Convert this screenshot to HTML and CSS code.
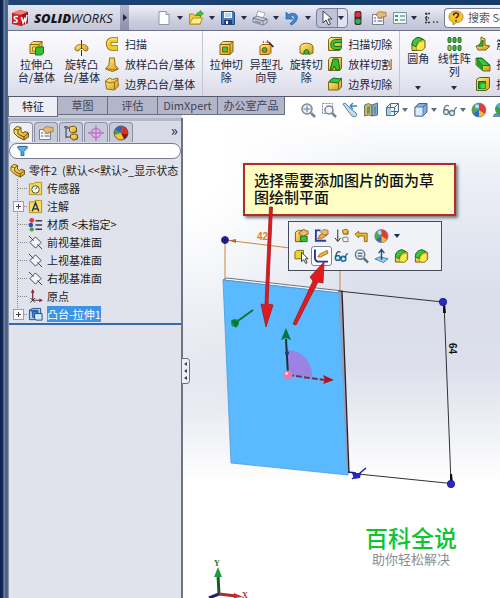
FILE: index.html
```html
<!DOCTYPE html>
<html lang="zh-CN">
<head>
<meta charset="utf-8">
<title>SolidWorks</title>
<link rel="stylesheet" href="styles.css">
</head>
<body>
<svg class="sprite" aria-hidden="true">
  <defs>
    <linearGradient id="gold" x1="0" y1="0" x2="1" y2="1"><stop offset="0" stop-color="#fff28a"/><stop offset="1" stop-color="#d99a10"/></linearGradient>
    <linearGradient id="blue" x1="0" y1="0" x2="1" y2="1"><stop offset="0" stop-color="#cfe8fb"/><stop offset="1" stop-color="#4f8fd0"/></linearGradient>
  </defs>
  <symbol id="caret" viewBox="0 0 6 4"><path d="M0 0h6L3 4z" fill="#222c4c"/></symbol>
  <symbol id="sw" viewBox="0 0 18 18"><path d="M1 4l8-3 8 2v11l-7 3-9-2z" fill="#c9222a"/><path d="M1 4l8-3 8 2-7 3z" fill="#ef8078"/><path d="M10 6l7-3v11l-7 3z" fill="#a4121d"/><path d="M7 7.500H4.500c-2 0-1.500 2.500 0 2.700 2 .2 2.500 3 0 3H2.500M10.500 8l1.500 6 1.500-4 1 3 1.500-7" fill="none" stroke="#fff" stroke-width="1.500"/></symbol>
  <symbol id="doc" viewBox="0 0 16 16"><path d="M3 1.500h7l3 3v10H3z" fill="#fdfefe" stroke="#8d97a8"/><path d="M10 1.500v3h3" fill="#d5dde8" stroke="#8d97a8"/></symbol>
  <symbol id="open" viewBox="0 0 16 16"><path d="M1.500 14V4h4l1 1.500h6V14z" fill="#f3cc3e" stroke="#b88a1c"/><path d="M1.500 14L5 8h9.500L12 14z" fill="#fff08c" stroke="#b88a1c"/><path d="M8 6c0-3 2-4 4-4V.5l3.500 3L12 6.500V5c-2 0-3 0-4 1z" fill="#4cc03a" stroke="#278a22" stroke-width=".6"/></symbol>
  <symbol id="save" viewBox="0 0 16 16"><path d="M1.500 1.500h12l1 1v12h-13z" fill="#477ec4" stroke="#224a86"/><path d="M4 2h8v6H4z" fill="#f1f7ff"/><path d="M5 4h6M5 6h6" stroke="#91a9c7"/><path d="M4 10h8v4.500H4z" fill="#233e70"/><path d="M6 11h2v3H6z" fill="#fff"/></symbol>
  <symbol id="print" viewBox="0 0 16 16"><path d="M4 7l2-6 7 2-2 5z" fill="#fff" stroke="#8994a6" stroke-width=".8"/><path d="M1 8l4-2 10 3v4l-4 2L1 12z" fill="#c9ced7" stroke="#677286" stroke-width=".8"/><path d="M1 8l10 3 4-2M3 11l6 2" fill="none" stroke="#515b6e" stroke-width=".8"/><path d="M11 11v4" stroke="#677286" stroke-width=".8"/></symbol>
  <symbol id="undo" viewBox="0 0 16 16"><path d="M2 2v7h7L6.500 6.500C11 4 12.500 9 6 13.500l1.500 1.500C18 9 13 0 4.500 4.500z" fill="#3e86d2" stroke="#205a9f" stroke-width=".7"/></symbol>
  <symbol id="cursor" viewBox="0 0 16 16"><path d="M5 1v12l3-3 2.500 5 2-1L10 9h4z" fill="#fff" stroke="#3c4254"/></symbol>
  <symbol id="traffic" viewBox="0 0 16 16"><rect x="4.500" y="1" width="7" height="14" rx="2" fill="#34363a"/><circle cx="8" cy="4.500" r="2.600" fill="#f12a32"/><circle cx="8" cy="11.300" r="2.600" fill="#30b44a"/></symbol>
  <symbol id="props" viewBox="0 0 16 16"><path d="M1.500 4.500h11v10h-11z" fill="#f7f7fa" stroke="#768196"/><path d="M3 8h2M3 11h2M6.500 8h5M6.500 11h5" stroke="#8490a8" stroke-width="1.300"/><path d="M5 5c1-3 4-4 6-3l4 .5v4l-4 .5-2 1.500L7.500 7z" fill="#e8b96c" stroke="#a5702e" stroke-width=".8"/></symbol>
  <symbol id="list" viewBox="0 0 16 16"><path d="M1.500 2.500h13v11h-13z" fill="#eef8f4" stroke="#6d9c9d"/><path d="M3 5h3v2H3zM3 9h3v2H3z" fill="#41a25e"/><path d="M8 6h5M8 10h5" stroke="#4a6c86"/></symbol>
  <symbol id="help" viewBox="0 0 16 16"><path d="M8 1C3.500 1 1 3.500 1 7c0 3 2 4.500 4 5v3l3.500-2.500C13 12.500 15 10 15 7c0-3.500-3-6-7-6z" fill="#f6c630" stroke="#ac7a14" stroke-width=".8"/><path d="M5.500 5.500c0-3.500 5-3 5-.5 0 1.800-2.500 1.800-2.500 3.500M8 10v1.500" fill="none" stroke="#5d2416" stroke-width="1.600"/></symbol>

  <symbol id="boss" viewBox="0 0 16 16"><path d="M1.500 4.500l3-3h9v9l-3 3h-9z" fill="url(#gold)" stroke="#8a6a08"/><path d="M1.500 4.500h9v9M10.500 4.500l3-3" fill="none" stroke="#8a6a08"/><path d="M4 7h4v4H4z" fill="#ffeb62" stroke="#a17c10"/><path d="M7 8l2-1h6v6l-2 2H7z" fill="#36bf36" stroke="#13791b"/></symbol>
  <symbol id="revolve" viewBox="0 0 16 16"><path d="M8 0v5M8 10v6" stroke="#333"/><path d="M1.500 9c0-4 4-4.500 6.500-4.500S14.500 5 14.500 9c0 2-3 2.500-4.500 1 0-2-4-2-4 0-1.500 1.500-4.500 1-4.500-1z" fill="url(#gold)" stroke="#896504"/><path d="M8 5v4" stroke="#333"/></symbol>
  <symbol id="sweep" viewBox="0 0 16 16"><path d="M14 4H8C3.500 4 3.500 12 8 12h6" fill="none" stroke="#8b6806" stroke-width="5.500"/><path d="M13.500 4H8C3.500 4 3.500 12 8 12h5.500" fill="none" stroke="#f3c82c" stroke-width="3.800"/><path d="M13 3H8C5 3 4 6 4 8" fill="none" stroke="#fff3a0"/></symbol>
  <symbol id="loft" viewBox="0 0 16 16"><path d="M5.500 2h5l.5 7 3.500 4-6 2.500L1.500 13 5 9z" fill="url(#gold)" stroke="#916b0a"/><path d="M2 12.500l6.500 1L14 13" fill="none" stroke="#ad7c12"/></symbol>
  <symbol id="boundary" viewBox="0 0 16 16"><path d="M1.500 5l4-3 3 1.500 5-1.500 1 8-4 4-8-1z" fill="url(#gold)" stroke="#927010"/><path d="M1.500 5l4 2 5-1 4-3M10.500 6v8" fill="none" stroke="#927010"/></symbol>
  <symbol id="cut" viewBox="0 0 16 16"><path d="M1.500 4.500l3-3h10v10l-3 3h-10z" fill="url(#gold)" stroke="#80620a"/><path d="M1.500 4.500h10v10M11.500 4.500l3-3" fill="none" stroke="#80620a"/><path d="M4 7h5v5H4z" fill="#54bf36" stroke="#6f600f"/></symbol>
  <symbol id="hole" viewBox="0 0 16 16"><path d="M1.500 6.500l2-2h9v8l-2 2h-9z" fill="url(#gold)" stroke="#9b5a0c"/><circle cx="6" cy="10" r="2.500" fill="#4ab830" stroke="#8a4a10"/><path d="M10 2l5 5" stroke="#222" stroke-width="1.500"/><path d="M9 0v3M7 2h3M5 1v2" stroke="#e65724"/></symbol>
  <symbol id="revcut" viewBox="0 0 16 16"><path d="M1.500 7c0-5 13-5 13 0v6l-4 1.500C11 8 5 8 5 14.500L1.500 13z" fill="url(#gold)" stroke="#86680b"/><path d="M5.500 14c0-6 5-6 5 0z" fill="#3db62f" stroke="#1d7b1d"/></symbol>
  <symbol id="sweepcut" viewBox="0 0 16 16"><path d="M1.500 3.500l2-2h11v11l-2 2h-11z" fill="url(#gold)" stroke="#80650a"/><path d="M14 5H9C4 5 4 12 9 12h5" fill="none" stroke="#167322" stroke-width="4"/><path d="M14 5H9C4 5 4 12 9 12h5" fill="none" stroke="#45c33c" stroke-width="2"/></symbol>
  <symbol id="loftcut" viewBox="0 0 16 16"><path d="M1.500 3.500l2-2h11v11l-2 2h-11z" fill="url(#gold)" stroke="#80650a"/><path d="M6 3h5l2 11H9L7.500 10 5 14H3z" fill="#38b732" stroke="#136a1b"/></symbol>
  <symbol id="boundcut" viewBox="0 0 16 16"><path d="M1.500 6l3-3 7 1 3-2v9l-3 3h-10z" fill="url(#gold)" stroke="#80650a"/><path d="M2 6l4-4 8 1-3 4z" fill="#38c43a" stroke="#137220"/><path d="M11.500 7v7" stroke="#80650a"/></symbol>
  <symbol id="fillet" viewBox="0 0 16 16"><path d="M1.500 9C1.500 4 5 1.500 9 1.500l5.500 3v7l-3 3h-10z" fill="url(#gold)" stroke="#5a680c"/><path d="M1.500 9C1.500 4 5 1.500 9 1.500l4 2C9 4 6 6 6 11z" fill="#3fc63b" stroke="#13701d"/><path d="M6 14V11c1-4 4-6 8-6v7l-3 2.500z" fill="#ffe84e" stroke="#9b8210" stroke-width=".6"/></symbol>
  <symbol id="pattern" viewBox="0 0 16 16"><g fill="#46b83f" stroke="#176a25"><rect x="1.500" y="1.500" width="3" height="5" rx="1"/><rect x="6.500" y="1.500" width="3" height="5" rx="1"/><rect x="11.500" y="1.500" width="3" height="5" rx="1"/><rect x="6.500" y="9.500" width="3" height="5" rx="1"/><rect x="11.500" y="9.500" width="3" height="5" rx="1"/><rect x="1.500" y="9.500" width="3" height="5" rx="1" fill="#e1c637"/></g></symbol>
  <symbol id="rib" viewBox="0 0 16 16"><path d="M1 10l5-1V1l4 2v6l5 1-4 4H3z" fill="url(#gold)" stroke="#80650a"/><path d="M3 10l5-6v6z" fill="#3aba36" stroke="#13701d"/></symbol>
  <symbol id="draft" viewBox="0 0 16 16"><path d="M1 2h6l8 7v6H8L1 9z" fill="url(#gold)" stroke="#6b7010"/><path d="M1.500 2.500L8 10v5L1.500 9z" fill="#249a2b"/><path d="M1.500 2.500H7l7.500 7H8z" fill="#38cd3a" stroke="#137220"/></symbol>
  <symbol id="shell" viewBox="0 0 16 16"><path d="M1.500 3.500l3-2h10v10l-3 3h-10z" fill="url(#gold)" stroke="#6b6010"/><path d="M3.500 5.500h7v7h-7z" fill="#189b2a" stroke="#0c6820"/><path d="M5.500 7.500h5v5h-5z" fill="#43db43"/></symbol>

  <symbol id="zoomfit" viewBox="0 0 16 16"><circle cx="7" cy="7" r="5" fill="#edf4fa" stroke="#7d8795" stroke-width="1.500"/><path d="M11 11l4 4" stroke="#7c8491" stroke-width="2.500"/><path d="M7 3.500v7M3.500 7h7" stroke="#617c9e"/></symbol>
  <symbol id="zoomarea" viewBox="0 0 16 16"><path d="M1.500 1.500h10v10h-10z" fill="none" stroke="#7889a3" stroke-dasharray="2 1"/><circle cx="8" cy="8" r="4" fill="#edf4fa" stroke="#7d8795" stroke-width="1.500"/><path d="M11 11l4 4" stroke="#7c8491" stroke-width="2.500"/></symbol>
  <symbol id="prev" viewBox="0 0 16 16"><path d="M1 2l2-1 6 6 5 4c2 3-1 5-4 3L6 9z" fill="#c8dced" stroke="#5380a8"/><path d="M8 4h7M8 4l3-3M8 4l3 3" fill="none" stroke="#3d85a8" stroke-width="1.300"/></symbol>
  <symbol id="section" viewBox="0 0 16 16"><path d="M1.500 3l4-1.500L9 3v11l-3.500-1L1.500 14z" fill="#d2b74c" stroke="#65748c"/><path d="M9 3l5.500-2v12L9 14z" fill="#7eaad6" stroke="#4d6d98"/><path d="M4 5l3-1v7l-3 1zM11 5l2-1v7l-2 1z" fill="#60997b"/></symbol>
  <symbol id="wire" viewBox="0 0 16 16"><path d="M2.500 5.500l4-4h8v8l-4 4h-8z" fill="#edf4fb" stroke="#526981"/><path d="M2.500 5.500h8v8M10.500 5.500l4-4M6.500 1.500v8h8M6.500 9.500l-4 4" fill="none" stroke="#526981"/><path d="M3 6h4v7H3z" fill="#a5cde9"/></symbol>
  <symbol id="shade" viewBox="0 0 16 16"><path d="M2 5l4-3.500h8V10l-4 4H2z" fill="#81aee5" stroke="#406293"/><path d="M2 5h8v9H2z" fill="#dcecfd" stroke="#5d7faf"/><path d="M10 5l4-3.500" stroke="#406293"/></symbol>
  <symbol id="glasses" viewBox="0 0 16 16"><circle cx="4" cy="10" r="2.500" fill="#dceff5" stroke="#667e8d" stroke-width="1.300"/><circle cx="10" cy="11" r="2.500" fill="#dceff5" stroke="#667e8d" stroke-width="1.300"/><path d="M2 9c0-4 2-7 5-5M12 10c1-4 2-5 3-4M6 10h2" fill="none" stroke="#667e8d" stroke-width="1.300"/></symbol>
  <symbol id="bluespecs" viewBox="0 0 16 16"><circle cx="4" cy="10" r="2.600" fill="#c9f0fa" stroke="#1f6f94" stroke-width="1.600"/><circle cx="10" cy="11" r="2.600" fill="#c9f0fa" stroke="#1f6f94" stroke-width="1.600"/><path d="M2 9c0-4 2-7 5-5M12 10c1-4 2-5 3-4M6 10h2" fill="none" stroke="#2c4e66" stroke-width="1.300"/></symbol>
  <symbol id="ball" viewBox="0 0 16 16"><circle cx="8" cy="8" r="7" fill="#e53a36"/><path d="M8 8L3 3a7 7 0 00-1 9z" fill="#46ad50"/><path d="M8 8V1a7 7 0 00-5 2z" fill="#4db6cf"/><path d="M8 8v7a7 7 0 01-6-3z" fill="#286ccf"/><path d="M8 8l6 4a7 7 0 01-6 3z" fill="#f2c12e"/><circle cx="8" cy="8" r="7" fill="none" stroke="#837a85" stroke-width=".7"/><circle cx="6" cy="4.500" r="2" fill="#fff" opacity=".6"/></symbol>
  <symbol id="beach" viewBox="0 0 16 16"><circle cx="8" cy="8" r="7" fill="#f4c32f"/><path d="M8 8L2 5a7 7 0 014-3.700h4z" fill="#2f61c8"/><path d="M8 8l2-6.700A7 7 0 0115 9z" fill="#dc2f2c"/><path d="M8 8L1.200 10A7 7 0 012 5z" fill="#3ba24a"/><path d="M8 8l7 1a7 7 0 01-4 5.300z" fill="#8d1820"/><circle cx="8" cy="8" r="7" fill="none" stroke="#4d4450" stroke-width=".8"/></symbol>
  <symbol id="scene" viewBox="0 0 16 16"><path d="M1 15c0-4 3-4 5-4h9v4z" fill="#6b8fb8"/><circle cx="9" cy="7" r="6" fill="#3a9d47"/><path d="M9 7L4 4a6 6 0 018-2z" fill="#4db6cf"/><path d="M9 7l6-1a6 6 0 01-5 7z" fill="#d9332f"/></symbol>
  <symbol id="part" viewBox="0 0 16 16"><path d="M1 4l3-2.500 4 1v4l2 1.500 2-1.500 3.500 1.500v4L11 15l-6-3-4-4z" fill="url(#gold)" stroke="#70510a"/><path d="M1 4l4 1v4l6 3 4-4M11 11v4M5 5l3-2" fill="none" stroke="#70510a"/></symbol>
  <symbol id="config" viewBox="0 0 16 16"><path d="M3 1v12M3 3h5M3 12h5" fill="none" stroke="#333a4a"/><path d="M6.500 2l5-1 2 2v4l-5 1-2-2z" fill="url(#gold)" stroke="#70510a"/><path d="M7.500 10l4-1 3 1v4l-4 1-3-2z" fill="url(#gold)" stroke="#70510a"/><path d="M1 1h4v2H1z" fill="#6d7788"/></symbol>
  <symbol id="target" viewBox="0 0 16 16"><circle cx="8" cy="8" r="4.500" fill="none" stroke="#c56cd0" stroke-width="1.300"/><path d="M8 0v16M0 8h16" stroke="#c56cd0" stroke-width="1.300"/></symbol>
  <symbol id="funnel" viewBox="0 0 12 12"><path d="M1 1h10v2L7.500 6.500V11h-3V6.500L1 3z" fill="#55b5e3" stroke="#225796"/></symbol>
  <symbol id="sensor" viewBox="0 0 16 16"><path d="M1.500 3h5l1-1.500h7v13h-13z" fill="#f9de55" stroke="#b58d1e"/><circle cx="8" cy="9" r="4" fill="#fffbe0" stroke="#3b4a58"/><path d="M8 9l2-3" stroke="#3b4a58"/></symbol>
  <symbol id="annot" viewBox="0 0 16 16"><path d="M1.500 3h5l1-1.500h7v13h-13z" fill="#f9de55" stroke="#b58d1e"/><path d="M4.500 13L8 4l3.500 9M5.500 10.500h5" fill="none" stroke="#222e52" stroke-width="1.500"/></symbol>
  <symbol id="material" viewBox="0 0 16 16"><circle cx="4" cy="3.500" r="2.500" fill="#e2303c"/><circle cx="3" cy="8.500" r="2.500" fill="#2e4db8"/><circle cx="4" cy="13.200" r="2.300" fill="#46a044"/><path d="M8 4h7M8 8.500h7M8 13h7" stroke="#383c48" stroke-width="1.500"/></symbol>
  <symbol id="plane" viewBox="0 0 16 16"><path d="M8 2l6 6-6 6-6-6z" fill="#f4f5f9" stroke="#363b4c"/><path d="M1 1l5 5M10 10l5 5" stroke="#363b4c"/></symbol>
  <symbol id="origin" viewBox="0 0 16 16"><path d="M5 1v11h9" fill="none" stroke="#7d2730" stroke-width="1.300"/><path d="M5 0L3 4h4zM16 12l-4-2v4z" fill="#912632"/><path d="M2.500 9.500l5 5M2.500 14.500l5-5" stroke="#30343d"/></symbol>
  <symbol id="bluefeat" viewBox="0 0 16 16"><path d="M1.500 3.500l3-2h9v8l-2 4h-10z" fill="#a5d0f6" stroke="#1d4d97"/><path d="M1.500 3.500h9v9M5 5h5v6H5z" fill="#4e94de" stroke="#1d4d97"/><path d="M7 7h8v7H9l-2-2z" fill="#d0e8fc" stroke="#164782"/></symbol>
  <symbol id="editfeat" viewBox="0 0 16 16"><path d="M1.500 4l3-2h5v12h-8z" fill="url(#gold)" stroke="#745706"/><path d="M7 8h7v6H7z" fill="#3fbe39" stroke="#196e1d"/><path d="M5 5l5-4 5 2v3l-5 2-3-1z" fill="#e7bd68" stroke="#8a5c26"/></symbol>
  <symbol id="editsketch" viewBox="0 0 16 16"><path d="M7 2H2v11h11" fill="none" stroke="#223daa" stroke-width="2"/><path d="M4 11l2-4 6-3 2 3-6 4z" fill="#f2a83a" stroke="#8c4e1c" stroke-width=".8"/><path d="M7 4l3-3 5 1v4l-4 1z" fill="#e7bd68" stroke="#8a5c26" stroke-width=".8"/></symbol>
  <symbol id="suppress" viewBox="0 0 16 16"><path d="M4 1v12M1 10l3 4 3-4" fill="none" stroke="#222"/><path d="M9 2l4-1 2 1v4h-5z" fill="url(#gold)" stroke="#745706"/><path d="M9 10l4-1 2 1v4h-5z" fill="#f1f1ee" stroke="#777"/></symbol>
  <symbol id="rollback" viewBox="0 0 16 16"><path d="M1 6l4-3v2h9v9h-3V8H5v2z" fill="#f0bd2d" stroke="#8c6410"/></symbol>
  <symbol id="selcube" viewBox="0 0 16 16"><path d="M1 4l2-2h7v7l-2 2H1z" fill="#e8d530" stroke="#776610"/><path d="M8 4v10l2.500-2 2 4 1.500-1-2-4h3z" fill="#fff" stroke="#333"/></symbol>
  <symbol id="sketch" viewBox="0 0 16 16"><path d="M1 1v9c0 3 2 4 5 4h9" fill="none" stroke="#25309b" stroke-width="2"/><path d="M4 9l2-3 8-4 1 3-8 4z" fill="#f5b83a" stroke="#91500f" stroke-width=".8"/></symbol>
  <symbol id="zoomsel" viewBox="0 0 16 16"><circle cx="6.500" cy="6.500" r="5" fill="#e5f0fb" stroke="#6a778a" stroke-width="1.500"/><path d="M10.500 10.500l4.500 4.500" stroke="#586c85" stroke-width="2.500"/><path d="M4 5h5M4 8h5" stroke="#333e58" stroke-width="1.200"/></symbol>
  <symbol id="normal" viewBox="0 0 16 16"><path d="M1 11l5-2 9 2-5 4z" fill="#9ccce9" stroke="#3e7bad"/><path d="M8 12V2M5 5l3-4 3 4" fill="none" stroke="#244c7f" stroke-width="1.500"/></symbol>
</svg>

<div class="window">
  <header class="titlebar">
    <div class="brand"><svg class="brand-mark"><use href="#sw"/></svg><span class="brand-name"><b>SOLID</b>WORKS</span></div>
    <button class="brand-more" aria-label="菜单"><svg viewBox="0 0 4 7"><path d="M0 0l4 3.500L0 7z" fill="#1e2748"/></svg></button>
    <nav class="quick">
      <button class="drop" aria-label="新建"><svg class="i"><use href="#doc"/></svg><svg class="c"><use href="#caret"/></svg></button>
      <button class="drop" aria-label="打开"><svg class="i"><use href="#open"/></svg><svg class="c"><use href="#caret"/></svg></button>
      <button class="drop" aria-label="保存"><svg class="i"><use href="#save"/></svg><svg class="c"><use href="#caret"/></svg></button>
      <button class="drop" aria-label="打印"><svg class="i"><use href="#print"/></svg><svg class="c"><use href="#caret"/></svg></button>
      <button class="drop" aria-label="撤销"><svg class="i"><use href="#undo"/></svg><svg class="c"><use href="#caret"/></svg></button>
      <button class="drop picked" aria-label="选择"><svg class="i"><use href="#cursor"/></svg><svg class="c"><use href="#caret"/></svg></button>
      <button class="single" aria-label="重建模型"><svg class="i"><use href="#traffic"/></svg></button>
      <button class="single" aria-label="文件属性"><svg class="i"><use href="#props"/></svg></button>
      <button class="drop" aria-label="选项"><svg class="i"><use href="#list"/></svg><svg class="c"><use href="#caret"/></svg></button>
      <button class="overflow" aria-label="更多"><svg viewBox="0 0 14 12"><path d="M0 1.500h5M0 6h4M0 10.500h5M1.500 1v10" stroke="#333" stroke-width="1.500" stroke-dasharray="2 1"/><path d="M8 10h1.500M11.500 10H13" stroke="#333" stroke-width="1.500"/></svg></button>
    </nav>
    <label class="search"><svg class="i"><use href="#help"/></svg><input type="text" aria-label="搜索" placeholder="搜索 SolidWorks"></label>
  </header>

  <section class="ribbon">
    <div class="group">
      <button class="big wide"><svg class="i"><use href="#boss"/></svg><span>拉伸凸<br>台/基体</span></button>
      <button class="big wide"><svg class="i"><use href="#revolve"/></svg><span>旋转凸<br>台/基体</span></button>
      <div class="stack">
        <button><svg class="i"><use href="#sweep"/></svg>扫描</button>
        <button><svg class="i"><use href="#loft"/></svg>放样凸台/基体</button>
        <button><svg class="i"><use href="#boundary"/></svg>边界凸台/基体</button>
      </div>
    </div>
    <div class="group">
      <button class="big"><svg class="i"><use href="#cut"/></svg><span>拉伸切<br>除</span></button>
      <button class="big"><svg class="i"><use href="#hole"/></svg><span>异型孔<br>向导</span></button>
      <button class="big"><svg class="i"><use href="#revcut"/></svg><span>旋转切<br>除</span></button>
      <div class="stack">
        <button><svg class="i"><use href="#sweepcut"/></svg>扫描切除</button>
        <button><svg class="i"><use href="#loftcut"/></svg>放样切割</button>
        <button><svg class="i"><use href="#boundcut"/></svg>边界切除</button>
      </div>
    </div>
    <div class="group">
      <button class="big menu"><svg class="i"><use href="#fillet"/></svg><span>圆角</span><svg class="c"><use href="#caret"/></svg></button>
      <button class="big menu"><svg class="i"><use href="#pattern"/></svg><span>线性阵<br>列</span><svg class="c"><use href="#caret"/></svg></button>
      <div class="stack last">
        <button><svg class="i"><use href="#rib"/></svg>筋</button>
        <button><svg class="i"><use href="#draft"/></svg>拔模</button>
        <button><svg class="i"><use href="#shell"/></svg>抽壳</button>
      </div>
    </div>
  </section>

  <div class="tabrow">
    <nav class="tabs">
      <button class="on">特征</button><button>草图</button><button>评估</button><button class="xpert">DimXpert</button><button class="office">办公室产品</button>
    </nav>
    <nav class="heads-up">
      <button aria-label="整屏显示"><svg class="i"><use href="#zoomfit"/></svg></button>
      <button aria-label="局部放大"><svg class="i"><use href="#zoomarea"/></svg></button>
      <button aria-label="上一视图"><svg class="i"><use href="#prev"/></svg></button>
      <button aria-label="剖面视图"><svg class="i"><use href="#section"/></svg></button>
      <button class="drop" aria-label="视图定向"><svg class="i"><use href="#wire"/></svg><svg class="c"><use href="#caret"/></svg></button>
      <button class="drop" aria-label="显示样式"><svg class="i"><use href="#shade"/></svg><svg class="c"><use href="#caret"/></svg></button>
      <button class="drop" aria-label="隐藏/显示"><svg class="i"><use href="#glasses"/></svg><svg class="c"><use href="#caret"/></svg></button>
      <button aria-label="外观"><svg class="i"><use href="#ball"/></svg></button>
      <button aria-label="布景"><svg class="i"><use href="#scene"/></svg></button>
    </nav>
  </div>

  <main class="workspace">
    <aside class="panel">
      <nav class="panel-tabs">
        <button class="on" aria-label="设计树"><svg class="i"><use href="#part"/></svg></button>
        <button aria-label="属性"><svg class="i"><use href="#props"/></svg></button>
        <button aria-label="配置"><svg class="i"><use href="#config"/></svg></button>
        <button aria-label="尺寸专家"><svg class="i"><use href="#target"/></svg></button>
        <button aria-label="外观管理"><svg class="i"><use href="#beach"/></svg></button>
        <span class="more">»</span>
      </nav>
      <label class="filter"><svg><use href="#funnel"/></svg><input type="text" aria-label="过滤"></label>
      <ul class="tree">
        <li class="root"><svg class="i"><use href="#part"/></svg><span>零件2&nbsp; (默认&lt;&lt;默认&gt;_显示状态</span></li>
        <li><svg class="i"><use href="#sensor"/></svg><span>传感器</span></li>
        <li class="plus"><svg class="i"><use href="#annot"/></svg><span>注解</span></li>
        <li><svg class="i"><use href="#material"/></svg><span>材质 &lt;未指定&gt;</span></li>
        <li><svg class="i"><use href="#plane"/></svg><span>前视基准面</span></li>
        <li><svg class="i"><use href="#plane"/></svg><span>上视基准面</span></li>
        <li><svg class="i"><use href="#plane"/></svg><span>右视基准面</span></li>
        <li><svg class="i"><use href="#origin"/></svg><span>原点</span></li>
        <li class="plus chosen"><svg class="i"><use href="#bluefeat"/></svg><span>凸台-拉伸1</span></li>
      </ul>
      <button class="handle" aria-label="折叠面板"><svg viewBox="0 0 8 26"><path d="M0 .5h5q2.500 0 2.500 3v19q0 3-2.500 3H0" fill="#eef0f6" stroke="#6a6e80"/><path d="M5 4v4L2 6zM5 11v4l-3-2zM5 18v4l-3-2z" fill="#3a4058"/></svg></button>
    </aside>

    <section class="viewport">
      <svg class="layer" viewBox="183 118 317 480" preserveAspectRatio="xMinYMin meet">
        <g fill="none" stroke="#c98545"><path d="M225 240v40M225 240l65 8M340 268v24"/></g>
        <path d="M229 240.500l7-1.500v4z" fill="#c06a20"/>
        <text class="dim orange" x="257" y="240">42</text>
        <path d="M223 280l4-2 116 13-4 2z" fill="#f4f8fc" stroke="#46536a" stroke-width=".8"/>
        <path d="M223 280l116 13 9 182-117-12z" fill="#5ab9ff" stroke="#4d9ad8" stroke-width=".8"/>
        <path d="M339 293l3-2 7 182-2 2z" fill="#9d9bb2"/>
        <path d="M342 291l7 182" stroke="#251f2c" stroke-width="1.300"/>
        <g stroke="#333" fill="none"><path d="M338 291l105 11M444 302l7 181M358 474l93 9.500"/></g>
        <path d="M443 304h2l1 9h-3zM450 474h2l1 9h-3z" fill="#111"/>
        <g fill="#2929c6" stroke="#101077" stroke-width=".7"><circle cx="225" cy="240" r="3.500"/><circle cx="443" cy="302" r="3.700"/><circle cx="451" cy="484" r="3.700"/></g>
        <path d="M221.500 240h7M225 236.500v7" stroke="#151547"/>
        <path d="M348 472l8 1M352 479l8-6 6-5" stroke="#1b1b9d" stroke-width="1.500" fill="none"/>
        <path d="M352 473h9l-1 5-6 1z" fill="#2525c4"/>
        <text class="dim" transform="translate(449 343) rotate(90)">64</text>
        <path d="M288 375v-25a25 25 0 0124 27z" fill="#9b83e3"/>
        <path d="M288 375l-2-36" stroke="#17352d" stroke-width="2"/><path d="M286 328l-5 12 5-2 5 2z" fill="#08753d"/>
        <path d="M288 375l37 5" stroke="#8b2642" stroke-width="2" stroke-dasharray="6 2"/><path d="M334 380l-11-5 2 5-2 4z" fill="#b01220"/>
        <circle cx="288" cy="375" r="4.500" fill="#e07ab5"/><circle cx="286.500" cy="373.500" r="1.500" fill="#f9cde5"/><circle cx="287" cy="353" r="2" fill="#223d70"/>
        <path d="M235 323l18-13" stroke="#08763b" stroke-width="2"/><circle cx="235" cy="323" r="4" fill="#0d9848"/><path d="M231 320l8 1-3 7z" fill="#087338"/>
        <path d="M219 594l-1-19" stroke="#185b25" stroke-width="3"/><path d="M218 567l-4 10h8z" fill="#219b3b"/>
        <path d="M219 594l17 2" stroke="#b52a27" stroke-width="3"/><path d="M243 597l-9-4v5z" fill="#cd2927"/><path d="M219 594l-10 4" stroke="#1d236c" stroke-width="3"/>
        <text class="axis" x="214" y="566">Y</text><text class="axis red" x="242" y="598">X</text>
      </svg>
      <div class="context">
        <div class="context-row">
          <button aria-label="编辑特征"><svg class="i"><use href="#editfeat"/></svg></button>
          <button aria-label="编辑草图"><svg class="i"><use href="#editsketch"/></svg></button>
          <button aria-label="压缩"><svg class="i"><use href="#suppress"/></svg></button>
          <button aria-label="退回"><svg class="i"><use href="#rollback"/></svg></button>
          <button class="drop" aria-label="外观"><svg class="i"><use href="#ball"/></svg><svg class="c"><use href="#caret"/></svg></button>
        </div>
        <div class="context-row">
          <button aria-label="选择其他"><svg class="i"><use href="#selcube"/></svg></button>
          <button class="hot" aria-label="草图绘制"><svg class="i"><use href="#sketch"/></svg></button>
          <button aria-label="隐藏"><svg class="i"><use href="#bluespecs"/></svg></button>
          <button aria-label="放大所选"><svg class="i"><use href="#zoomsel"/></svg></button>
          <button aria-label="正视于"><svg class="i"><use href="#normal"/></svg></button>
          <button aria-label="圆角"><svg class="i"><use href="#fillet"/></svg></button>
          <button aria-label="倒角"><svg class="i"><use href="#fillet"/></svg></button>
        </div>
      </div>
      <p class="callout">选择需要添加图片的面为草图绘制平面</p>
      <svg class="layer arrows" viewBox="183 118 317 480" preserveAspectRatio="xMinYMin meet">
        <g fill="#e01a1e" stroke="#9d1c20" stroke-width=".8"><path d="M269.500 207h3L268 304l5 1-7 22-5-23 4 1z"/><path d="M293 324l20-43-3-4 14-15-1 21-5-1-22 43z"/></g>
      </svg>
      <div class="badge"><strong>百科全说</strong><span>助你轻松解决</span></div>
    </section>
  </main>
</div>
</body>
</html>
```
FILE: styles.css
```css
* { box-sizing: border-box; }

body {
  margin: 0;
  height: 100vh;
  overflow: hidden;
  font: 11px/13px "Noto Sans CJK SC", sans-serif;
  color: #20263c;
}

button, input { font: inherit; color: inherit; }
button { padding: 0; border: 0; background: none; }
svg { display: block; flex: none; }
.sprite { position: absolute; width: 0; height: 0; }
.i { width: 16px; height: 16px; }
.c { width: 6px; height: 4px; }

.window {
  display: flex;
  flex-direction: column;
  height: 100vh;
  padding: 5px 0 0 8px;
  background: linear-gradient(90deg, #0d2146 0, #142d59 3px, #8093ae 4px, #3c5880 6px, #5c7191 8px, #1d4575 9px, #173b69);
}

/* title bar */
.titlebar {
  display: flex;
  align-items: stretch;
  height: 26px;
  border-bottom: 1px solid #6d7188;
  background: linear-gradient(#eff0f8, #cdcfdf 60%, #bfc2d6);
}
.brand {
  display: flex;
  align-items: center;
  gap: 5px;
  width: 112px;
  padding-left: 3px;
  background: linear-gradient(#e5e7f0, #c2c5d6);
}
.brand-mark { width: 18px; height: 18px; }
.brand-name { font: italic 13px/14px "Open Sans", sans-serif; color: #17181c; }
.brand-name b { font-weight: 800; }
.brand-more {
  display: grid;
  place-items: center;
  width: 9px;
  background: linear-gradient(#b4b6ca, #8c8fab);
}
.brand-more svg { width: 4px; height: 7px; }
.quick { display: flex; flex: 1; align-items: center; padding-left: 27px; }
.drop { display: flex; align-items: center; gap: 5px; }
.quick .drop { width: 32px; }
.quick .picked {
  height: 20px;
  gap: 4px;
  padding-left: 1px;
  border: 1px solid #777d9c;
  border-radius: 4px;
  background: linear-gradient(90deg, #bfc3d8 20px, #777d9c 20px, #777d9c 21px, #e0e2ef 21px);
}
.single { width: 21px; padding-left: 2px; }
.quick .single + .drop { margin-left: 2px; gap: 3px; width: 33px; }
.overflow svg { width: 14px; height: 12px; }
.search {
  display: flex;
  align-items: center;
  align-self: center;
  gap: 4px;
  width: 56px;
  height: 20px;
  padding-left: 3px;
  border: 1px solid #777c92;
  border-right: 0;
  border-radius: 4px 0 0 4px;
  background: #fff;
}
.search input, .filter input { flex: 1; min-width: 0; padding: 0; border: 0; outline: 0; background: none; }
.search input::placeholder { color: #555966; opacity: 1; }

/* ribbon */
.ribbon {
  display: flex;
  height: 66px;
  overflow: hidden;
  border-bottom: 1px solid #555970;
  background: linear-gradient(#fbfbfe, #ececf4 60%, #d9dbe8);
}
.group { display: flex; flex: none; padding: 5px 0 0 3px; }
.group:first-child { padding-left: 6px; }
.group:last-child { padding-left: 0; }
.group + .group { border-left: 1px solid #c3c6d4; }
.big { display: flex; flex-direction: column; align-items: center; gap: 2px; width: 40px; padding-top: 4px; }
.wide { width: 45px; }
.big .i { width: 17px; }
.menu { position: relative; width: 36px; padding-top: 0; gap: 0; }
.menu .c { position: absolute; bottom: 6px; }
.stack { display: flex; flex-direction: column; gap: 4px; padding-right: 7px; }
.big + .stack { margin-left: 1px; }
.wide + .stack { margin-left: 0; }
.big + .last { margin-left: 3px; }
.stack button { display: flex; align-items: center; gap: 5px; height: 16px; white-space: nowrap; }

/* command tabs and view toolbar */
.tabrow { display: flex; height: 21px; background: #fff; }
.tabs { display: flex; align-items: flex-start; background: linear-gradient(90deg, #c9cddd 174px, #fff 174px); }
.tabs button {
  width: 50px;
  height: 18px;
  border: 1px solid #6a6e82;
  border-width: 0 1px 1px 0;
  background: #b3b6c9;
  color: #3f4459;
}
.tabs .on { height: 20px; border-left: 1px solid #777; background: #eeeff6; color: #14182a; }
.tabs .xpert { width: 60px; }
.tabs .office { width: 67px; }
.heads-up { display: flex; align-items: flex-start; flex: 1; min-width: 0; overflow: hidden; gap: 5px; padding: 5px 0 0 15px; }
.heads-up .drop { gap: 2px; }
.heads-up .c { opacity: .7; }

/* feature tree */
.workspace { display: grid; grid-template-columns: 175px minmax(0, 1fr); flex: 1; min-height: 0; }
.panel { position: relative; border-right: 2px solid #6f7284; background: #e1e3ec; border-left: 1px solid #8f96a9; }
.panel-tabs { display: flex; align-items: flex-end; gap: 1px; height: 25px; padding-bottom: 1px; border-top: 3px solid #b4b9ca; background: #d9dce7; }
.panel-tabs button {
  display: grid;
  place-items: center;
  width: 24px;
  height: 20px;
  border: 1px solid #8b8fa2;
  border-bottom: 0;
  border-radius: 4px 4px 0 0;
  background: #c7cad8;
}
.panel-tabs .on { background: #eef0f6; }
.more { margin-left: auto; padding: 0 3px 6px; font-size: 15px; }
.filter {
  display: flex;
  align-items: center;
  gap: 4px;
  height: 16px;
  padding-left: 7px;
  border: 1px solid #777c91;
  border-radius: 8px;
  background: #fff;
}
.filter svg { width: 11px; height: 12px; }
.tree {
  position: relative;
  margin: 0;
  padding: 2px 0 0;
  border-bottom: 2px solid #376aa8;
  list-style: none;
  color: #1a1c24;
}
.tree::before { content: ""; position: absolute; left: 8px; top: 20px; bottom: 9px; border-left: 1px dotted #888; }
.tree li { position: relative; display: flex; align-items: center; gap: 4px; height: 18px; padding-left: 19px; white-space: nowrap; }
.tree .i { width: 15px; height: 15px; }
.tree li::before { content: ""; position: absolute; left: 9px; width: 9px; border-top: 1px dotted #888; }
.tree .root { padding-left: 1px; overflow: hidden; }
.tree .root::before { display: none; }
.plus::after {
  content: "";
  position: absolute;
  left: 4px;
  width: 9px;
  height: 9px;
  border: 1px solid #9a9eac;
  background: linear-gradient(#444, #444) center / 5px 1px no-repeat, linear-gradient(#444, #444) center / 1px 5px no-repeat, #f8f8fb;
}
.chosen span { background: #3d94e4; color: #fff; line-height: 16px; }
.handle { position: absolute; z-index: 2; right: -9px; top: 50%; width: 8px; height: 26px; }
.handle svg { width: 8px; height: 26px; }

/* model view */
.viewport {
  position: relative;
  overflow: hidden;
  background:
    radial-gradient(ellipse 200px 260px at 0 40px, #fff 20%, #ffffff00),
    linear-gradient(#fff, #eceff6 12%, #dadeea 38%, #dde0eb 52%, #fff 76%);
}
.layer { position: absolute; inset: 0; width: 100%; height: 100%; }
.arrows { pointer-events: none; }
.dim { font: bold 10px "Liberation Sans", sans-serif; fill: #111; }
.orange { fill: #d98330; }
.axis { font: bold 8px "Liberation Serif", serif; fill: #286c35; }
.red { fill: #bb2b28; }
.callout {
  position: absolute;
  left: 60px;
  top: 45px;
  width: 213px;
  margin: 0;
  padding: 6px 9px 9px;
  border: 2px solid #b52b2b;
  background: #ffffc4;
  box-shadow: 2px 2px 3px #777;
  color: #111;
  font-size: 15px;
  font-weight: 500;
  line-height: 17px;
}
.context {
  position: absolute;
  left: 105px;
  top: 103px;
  width: 154px;
  padding: 4px 4px 4px 5px;
  border: 1px solid #444a5c;
  background: #f1f2f8;
}
.context-row { display: flex; gap: 5px; height: 20px; align-items: center; }
.context .i { width: 15px; height: 16px; }
.context .hot { margin: 0 -3px; padding: 1px 2px; border: 1px solid #7a82a4; border-radius: 3px; background: #fff; }
.badge {
  position: absolute;
  right: 25px;
  bottom: 27px;
  display: flex;
  flex-direction: column;
  align-items: center;
  gap: 2px;
  width: 128px;
  padding: 13px 0 5px;
  background: #fff;
}
.badge strong { color: #0cc52f; font-size: 23px; line-height: 26px; font-weight: 500; }
.badge span { color: #8d8d8d; font-size: 13px; line-height: 14px; }
```
